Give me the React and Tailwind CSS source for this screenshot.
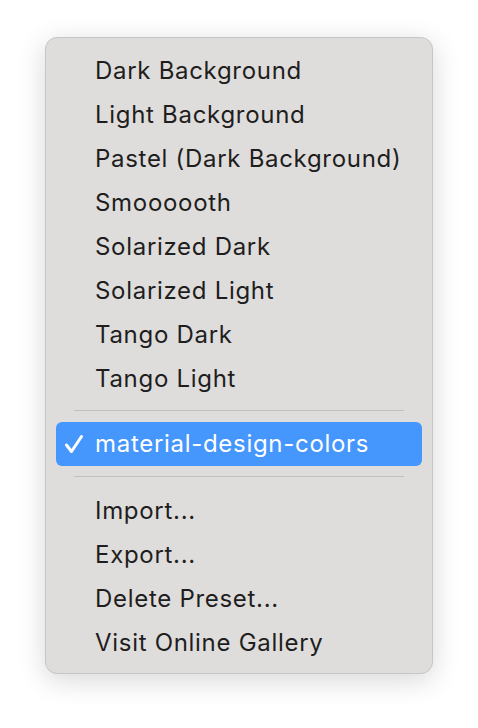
import React from "react";

const top = [
  "Dark Background",
  "Light Background",
  "Pastel (Dark Background)",
  "Smoooooth",
  "Solarized Dark",
  "Solarized Light",
  "Tango Dark",
  "Tango Light",
];
const bottom = ["Import...", "Export...", "Delete Preset...", "Visit Online Gallery"];

function Item({ label }) {
  return (
    <div className="h-[44px] flex items-center pl-[39px] text-[24px] tracking-[0.7px] text-[#1e1e1e] leading-none">
      {label}
    </div>
  );
}

export default function App() {
  return (
    <div
      className="w-[478px] h-[728px] bg-white pt-[37px] pl-[45px]"
      style={{ fontFamily: "Inter, 'Noto Sans', sans-serif" }}
    >
      <div className="w-[388px] h-[637px] rounded-[12px] bg-[#dfdddb] border border-[#c8c6c4] shadow-[0_6px_28px_rgba(0,0,0,0.16)] px-[10px] pt-[11px] pb-[9px] box-border">
        {top.map((t) => (
          <Item key={t} label={t} />
        ))}
        <div className="px-[18px] pt-[9px] pb-[11px]">
          <div className="h-px bg-[#c3c1bf]" />
        </div>
        <div className="h-[44px] rounded-[6px] bg-[#4596fd] flex items-center text-white text-[24px] tracking-[0.7px] leading-none">
          <svg width="20" height="20" viewBox="0 0 20 20" className="ml-[8px] mr-[11px]">
            <path d="M2.5 11 L7.5 17.5 L17.5 2.5" fill="none" stroke="white" strokeWidth="3" strokeLinecap="round" strokeLinejoin="round" />
          </svg>
          <span>material-design-colors</span>
        </div>
        <div className="px-[18px] pt-[10px] pb-[12px]">
          <div className="h-px bg-[#c3c1bf]" />
        </div>
        {bottom.map((t) => (
          <Item key={t} label={t} />
        ))}
      </div>
    </div>
  );
}
